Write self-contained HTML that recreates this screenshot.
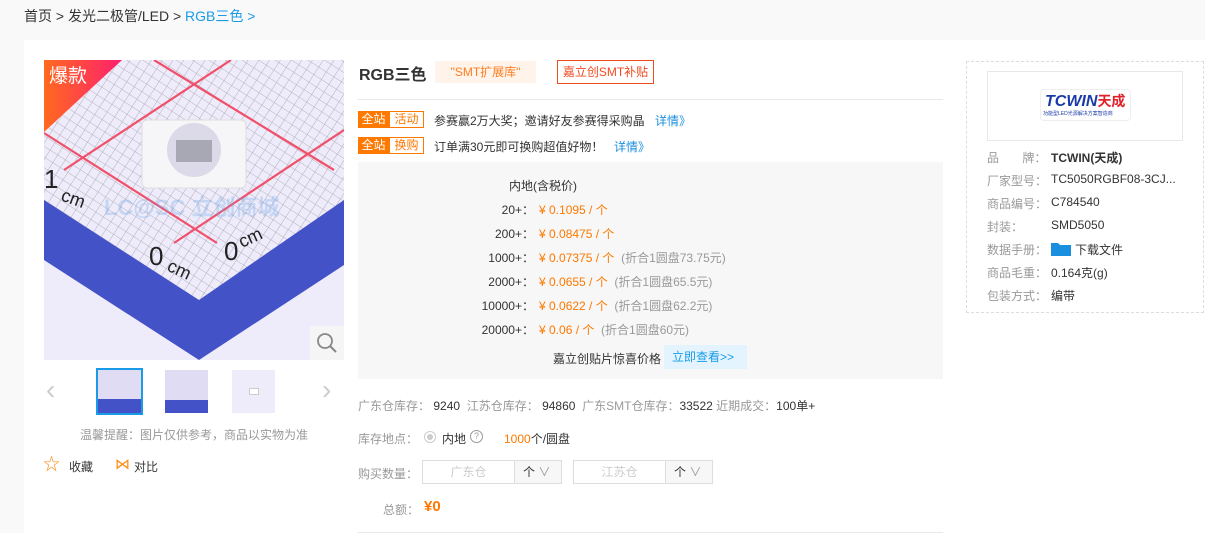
<!DOCTYPE html>
<html><head><meta charset="utf-8"><style>
*{margin:0;padding:0;box-sizing:border-box}
body{width:1205px;height:533px;overflow:hidden;background:#f9f9f9;font-family:"Liberation Sans","Noto Sans CJK SC",sans-serif;font-size:12px;color:#333;position:relative}
.a{position:absolute;white-space:nowrap}
.o{color:#ff7800}
.g{color:#999}
.b{color:#1a8fe0}
</style></head><body>
<div class="a" style="left:24px;top:6px;font-size:14px;color:#333">首页 &gt; 发光二极管/LED &gt; <span style="color:#1a9be8">RGB三色 &gt;</span></div>
<div class="a" style="left:24px;top:40px;width:1181px;height:493px;background:#fff"></div>

<!-- main image -->
<svg class="a" style="left:44px;top:60px" width="300" height="300" viewBox="0 0 300 300">
<defs><pattern id="p" width="9" height="9" patternUnits="userSpaceOnUse" patternTransform="rotate(33)"><path d="M0 0H9M0 0V9" stroke="#666" stroke-width="0.8"/></pattern>
<linearGradient id="t" x1="0" y1="0" x2="1" y2="0"><stop offset="0" stop-color="#ff6a1f"/><stop offset="1" stop-color="#ff1f6e"/></linearGradient></defs>
<rect width="300" height="300" fill="#eeebfb"/>
<polygon points="0,0 300,0 300,140 155,240 0,140" fill="url(#p)" opacity="0.55"/>
<g stroke="#f0506a" stroke-width="2.2" fill="none">
<path d="M110 0 L290 110"/><path d="M187 0 L20 110"/><path d="M0 73 L173 183"/><path d="M130 183 L300 70"/>
</g>
<polygon points="0,140 155,240 300,140 300,205 155,300 0,200" fill="#4452c8"/>
<g transform="translate(150,95)"><rect x="-52" y="-35" width="104" height="68" rx="5" fill="#f6f6f8" stroke="#ddd"/><circle cx="0" cy="-5" r="27" fill="#dcdae8"/><rect x="-18" y="-15" width="36" height="22" fill="#a8a8b4"/></g>
<text x="0" y="128" font-size="26" fill="#222">1</text><text x="16" y="140" font-size="18" fill="#222" transform="rotate(20 16 140)">cm</text>
<text x="105" y="205" font-size="26" fill="#222">0</text><text x="122" y="210" font-size="18" fill="#222" transform="rotate(25 122 210)">cm</text>
<text x="180" y="200" font-size="26" fill="#222">0</text><text x="198" y="188" font-size="18" fill="#222" transform="rotate(-25 198 188)">cm</text>
<text x="60" y="155" font-size="22" fill="#6aa8e8" opacity="0.3" font-weight="bold">LC@SC 立创商城</text>
<polygon points="0,0 78,0 0,72" fill="url(#t)"/>
<text x="5" y="22" font-size="19" fill="#fff" font-family="Noto Sans CJK SC">爆款</text>
<rect x="266" y="266" width="34" height="34" fill="#f5f5f5"/>
<circle cx="281" cy="281" r="7" fill="none" stroke="#888" stroke-width="1.8"/><path d="M286 286 L292 292" stroke="#888" stroke-width="2"/>
</svg>
<div class="a" style="left:46px;top:376px;font-size:28px;color:#ccc;line-height:28px">‹</div>
<div class="a" style="left:322px;top:376px;font-size:28px;color:#ccc;line-height:28px">›</div>
<div class="a" style="left:96px;top:368px;width:47px;height:47px;border:2px solid #1a9be8;background:#e0dcf4"><div style="position:absolute;left:0;bottom:0;width:43px;height:14px;background:#4452c8"></div></div>
<div class="a" style="left:165px;top:370px;width:43px;height:43px;background:#e0dcf4"><div style="position:absolute;left:0;bottom:0;width:43px;height:13px;background:#4452c8"></div></div>
<div class="a" style="left:232px;top:370px;width:43px;height:43px;background:#eeecfa"><div style="position:absolute;left:17px;top:18px;width:10px;height:7px;background:#fff;border:1px solid #ccc"></div></div>
<div class="a g" style="left:80px;top:426px">温馨提醒：图片仅供参考，商品以实物为准</div>
<div class="a" style="left:43px;top:456px;font-size:17px;color:#ff8c1a;line-height:17px">☆</div>
<div class="a" style="left:69px;top:458px">收藏</div>
<div class="a" style="left:115px;top:455px;font-size:15px;color:#ff8c1a">⋈</div>
<div class="a" style="left:134px;top:458px">对比</div>

<!-- middle -->
<div class="a" style="left:359px;top:61px;font-size:16px;font-weight:bold;color:#333">RGB三色</div>
<div class="a" style="left:435px;top:61px;width:101px;height:22px;background:#fff3ea;color:#ff7d1f;text-align:center;line-height:22px">"SMT扩展库"</div>
<div class="a" style="left:557px;top:60px;width:97px;height:24px;border:1px solid #f04a1e;color:#f04a1e;text-align:center;line-height:22px">嘉立创SMT补贴</div>
<div class="a" style="left:358px;top:99px;width:585px;height:1px;background:#e8e8e8"></div>
<div class="a" style="left:358px;top:111px;width:31px;height:17px;background:#ff7800;color:#fff;line-height:17px;text-align:center">全站</div>
<div class="a" style="left:389px;top:111px;width:35px;height:17px;border:1px solid #ff7800;color:#ff7800;line-height:15px;text-align:center">活动</div>
<div class="a" style="left:434px;top:112px">参赛赢2万大奖；邀请好友参赛得采购晶</div>
<div class="a b" style="left:655px;top:112px">详情》</div>
<div class="a" style="left:358px;top:137px;width:31px;height:17px;background:#ff7800;color:#fff;line-height:17px;text-align:center">全站</div>
<div class="a" style="left:389px;top:137px;width:35px;height:17px;border:1px solid #ff7800;color:#ff7800;line-height:15px;text-align:center">换购</div>
<div class="a" style="left:434px;top:138px">订单满30元即可换购超值好物！</div>
<div class="a b" style="left:614px;top:138px">详情》</div>
<div class="a" style="left:358px;top:162px;width:585px;height:217px;background:#f7f7f7"></div>
<div class="a" style="left:509px;top:177px">内地(含税价)</div>
<div class="a" style="left:350px;top:201px;width:184px;text-align:right">20+：</div><div class="a o" style="left:539px;top:201px">¥ 0.1095 / 个</div>
<div class="a" style="left:350px;top:225px;width:184px;text-align:right">200+：</div><div class="a o" style="left:539px;top:225px">¥ 0.08475 / 个</div>
<div class="a" style="left:350px;top:249px;width:184px;text-align:right">1000+：</div><div class="a o" style="left:539px;top:249px">¥ 0.07375 / 个 <span class="g">&nbsp;(折合1圆盘73.75元)</span></div>
<div class="a" style="left:350px;top:273px;width:184px;text-align:right">2000+：</div><div class="a o" style="left:539px;top:273px">¥ 0.0655 / 个 <span class="g">&nbsp;(折合1圆盘65.5元)</span></div>
<div class="a" style="left:350px;top:297px;width:184px;text-align:right">10000+：</div><div class="a o" style="left:539px;top:297px">¥ 0.0622 / 个 <span class="g">&nbsp;(折合1圆盘62.2元)</span></div>
<div class="a" style="left:350px;top:321px;width:184px;text-align:right">20000+：</div><div class="a o" style="left:539px;top:321px">¥ 0.06 / 个 <span class="g">&nbsp;(折合1圆盘60元)</span></div>
<div class="a" style="left:553px;top:350px">嘉立创贴片惊喜价格</div>
<div class="a" style="left:664px;top:345px;width:83px;height:24px;background:#e3f4ff;color:#1a9be8;line-height:24px;padding-left:8px">立即查看&gt;&gt;</div>

<div class="a" style="left:358px;top:397px"><span class="g">广东仓库存：</span> 9240 &nbsp;<span class="g">江苏仓库存：</span> 94860 &nbsp;<span class="g">广东SMT仓库存：</span>33522 <span class="g">近期成交：</span>100单+</div>
<div class="a g" style="left:358px;top:430px">库存地点：</div>
<div class="a" style="left:424px;top:431px;width:12px;height:12px;border:1px solid #ccc;border-radius:50%"><div style="margin:2px;width:6px;height:6px;border-radius:50%;background:#ccc"></div></div>
<div class="a" style="left:442px;top:430px">内地</div>
<div class="a g" style="left:470px;top:430px;width:13px;height:13px;border:1px solid #999;border-radius:50%;font-size:9px;line-height:11px;text-align:center">?</div>
<div class="a" style="left:504px;top:430px"><span class="o">1000</span>个/圆盘</div>
<div class="a g" style="left:358px;top:465px">购买数量：</div>
<div class="a" style="left:422px;top:460px;width:140px;height:24px;border:1px solid #ddd"><div style="position:absolute;left:0;width:91px;text-align:center;line-height:22px;color:#ccc">广东仓</div><div style="position:absolute;left:91px;top:0;width:47px;height:22px;border-left:1px solid #ddd;background:#f7f7f7;line-height:22px;padding-left:8px">个 <span class="g">∨</span></div></div>
<div class="a" style="left:573px;top:460px;width:140px;height:24px;border:1px solid #ddd"><div style="position:absolute;left:0;width:91px;text-align:center;line-height:22px;color:#ccc">江苏仓</div><div style="position:absolute;left:91px;top:0;width:47px;height:22px;border-left:1px solid #ddd;background:#f7f7f7;line-height:22px;padding-left:8px">个 <span class="g">∨</span></div></div>
<div class="a g" style="left:383px;top:501px">总额：</div>
<div class="a o" style="left:424px;top:498px;font-size:15px;font-weight:bold">¥0</div>
<div class="a" style="left:358px;top:532px;width:585px;height:1px;background:#e8e8e8"></div>

<!-- right card -->
<div class="a" style="left:966px;top:61px;width:238px;height:252px;border:1px dashed #ddd"></div>
<div class="a" style="left:987px;top:71px;width:196px;height:70px;border:1px solid #e8e8e8"></div>
<div class="a" style="left:1040px;top:89px;width:91px;height:32px;border:1px solid #eee;border-radius:4px"></div>
<div class="a" style="left:1045px;top:91px;font-size:16px;font-weight:bold;font-style:italic;color:#1a3aa8">TCWIN<span style="color:#e0202a;font-style:normal;font-size:14px">天成</span></div>
<div class="a" style="left:1043px;top:110px;font-size:5px;color:#1a3aa8">功能型LED光源解决方案智造商</div>
<div class="a g" style="left:987px;top:149px">品&nbsp;&nbsp;&nbsp;&nbsp;&nbsp;&nbsp;&nbsp;牌：</div><div class="a" style="left:1051px;top:149px;font-weight:bold">TCWIN(天成)</div>
<div class="a g" style="left:987px;top:172px">厂家型号：</div><div class="a" style="left:1051px;top:172px">TC5050RGBF08-3CJ...</div>
<div class="a g" style="left:987px;top:195px">商品编号：</div><div class="a" style="left:1051px;top:195px">C784540</div>
<div class="a g" style="left:987px;top:218px">封装：</div><div class="a" style="left:1051px;top:218px">SMD5050</div>
<div class="a g" style="left:987px;top:241px">数据手册：</div>
<svg class="a" style="left:1051px;top:242px" width="20" height="14"><path d="M0 1h7l2 2h11v11H0z" fill="#1a8fe0"/></svg>
<div class="a" style="left:1075px;top:241px">下载文件</div>
<div class="a g" style="left:987px;top:264px">商品毛重：</div><div class="a" style="left:1051px;top:264px">0.164克(g)</div>
<div class="a g" style="left:987px;top:287px">包装方式：</div><div class="a" style="left:1051px;top:287px">编带</div>
</body></html>
